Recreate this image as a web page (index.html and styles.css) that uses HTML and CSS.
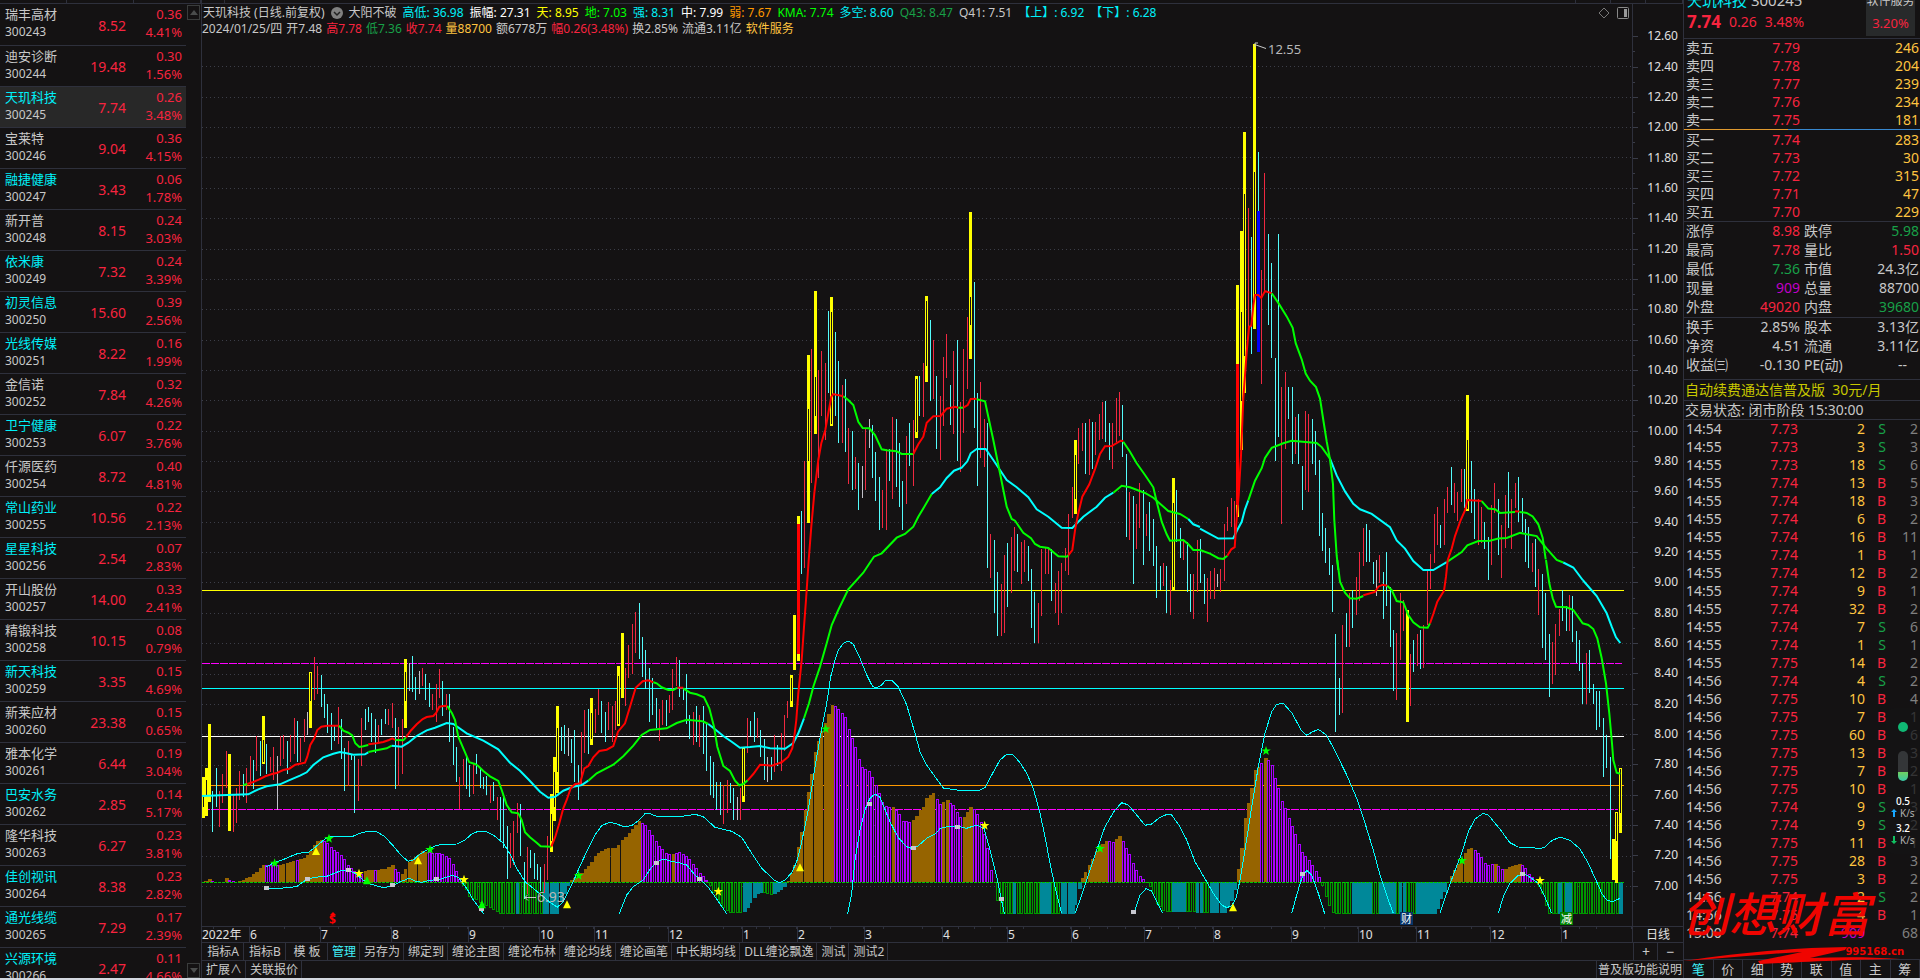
FILE: index.html
```html
<!DOCTYPE html>
<html lang="zh-CN">
<head>
    <meta charset="UTF-8">
    <meta name="viewport" content="width=device-width, initial-scale=1.0">
    <title>天玑科技 300245</title>
    <link rel="stylesheet" href="styles.css">
</head>
<body>
    <div class="app">
        <aside class="sidebar">
            <div class="strip strip-left"><i></i><i></i><i></i></div>
            <div class="sidebar-body">
                <table class="stocks">
                    <tbody id="stocks"></tbody>
                </table>
                <div class="scroll">
                    <button class="scroll-btn" aria-label="向上"><svg width="8" height="5" viewBox="0 0 8 5"><path d="M0 5L4 0L8 5Z" fill="#4a4c4c"/></svg></button>
                    <button class="scroll-btn" aria-label="向下"><svg width="8" height="5" viewBox="0 0 8 5"><path d="M0 0L4 5L8 0Z" fill="#4a4c4c"/></svg></button>
                </div>
            </div>
        </aside>

        <main class="main">
            <div class="strip strip-main"><i></i><i></i><i></i><i></i><i></i></div>
            <div class="chart">
                <div class="plot">
                    <header class="info">
                        <div class="info-row">
                            <span>天玑科技 (日线.前复权)</span>
                            <svg class="drop" width="12" height="12" viewBox="0 0 12 12"><circle cx="6" cy="6" r="6" fill="#808080"/><path d="M3 5L6 8L9 5" fill="none" stroke="#222" stroke-width="1.5"/></svg>
                            <span>大阳不破</span>
                            <span class="cyan">高低: 36.98</span>
                            <span class="white">振幅: 27.31</span>
                            <span class="yellow">天: 8.95</span>
                            <span class="lime">地: 7.03</span>
                            <span class="cyan">强: 8.31</span>
                            <span class="white">中: 7.99</span>
                            <span class="orange">弱: 7.67</span>
                            <span class="lime">KMA: 7.74</span>
                            <span class="cyan">多空: 8.60</span>
                            <span class="green">Q43: 8.47</span>
                            <span>Q41: 7.51</span>
                            <span class="cyan">【上】: 6.92</span>
                            <span class="cyan">【下】: 6.28</span>
                            <span class="tools">
                                <svg width="12" height="12" viewBox="0 0 12 12"><path d="M6 1L11 6L6 11L1 6Z" fill="none" stroke="#777"/></svg>
                                <svg width="12" height="12" viewBox="0 0 12 12"><rect x="0.5" y="0.5" width="11" height="11" rx="1" fill="none" stroke="#888"/><rect x="7" y="2" width="3" height="8" fill="#999"/></svg>
                            </span>
                        </div>
                        <div class="info-row tight">
                            <span>2024/01/25/四</span>
                            <span>开7.48</span>
                            <span class="red">高7.78</span>
                            <span class="green">低7.36</span>
                            <span class="red">收7.74</span>
                            <span class="gold">量88700</span>
                            <span>额6778万</span>
                            <span class="red">幅0.26(3.48%)</span>
                            <span>换2.85%</span>
                            <span>流通3.11亿</span>
                            <span class="gold">软件服务</span>
                        </div>
                    </header>
                    <svg class="canvas" id="canvas" viewBox="202 37 1430 889" preserveAspectRatio="none"></svg>
                </div>
                <div class="axis" id="axis"></div>
            </div>
            <div class="dates">
                <div class="months">
                    <span>2022年</span><span>6</span><span>7</span><span>8</span><span>9</span><span>10</span><span>11</span><span>12</span><span>1</span><span>2</span><span>3</span><span>4</span><span>5</span><span>6</span><span>7</span><span>8</span><span>9</span><span>10</span><span>11</span><span>12</span><span>1</span>
                </div>
                <button class="period">日线</button>
            </div>
            <nav class="tabs">
                <button class="short">指标A</button>
                <button class="short">指标B</button>
                <button class="short">模 板</button>
                <button class="active">管理</button>
                <button>另存为</button>
                <button>绑定到</button>
                <button>缠论主图</button>
                <button>缠论布林</button>
                <button>缠论均线</button>
                <button>缠论画笔</button>
                <button>中长期均线</button>
                <button>DLL缠论飘逸</button>
                <button>测试</button>
                <button>测试2</button>
                <button class="zoom first">+</button>
                <button class="zoom">−</button>
            </nav>
            <nav class="tabs">
                <button>扩展∧</button>
                <button>关联报价</button>
                <button class="first help">普及版功能说明</button>
            </nav>
        </main>

        <aside class="quote">
            <section class="head">
                <div class="head-left">
                    <div class="head-name"><b class="cyan">天玑科技</b> 300245</div>
                    <div class="head-price red"><strong>7.74</strong><span>0.26</span><span>3.48%</span></div>
                </div>
                <div class="sector"><span>软件服务</span><span class="red">3.20%</span></div>
            </section>
            <table class="book">
                <tbody>
                    <tr><th>卖五</th><td>7.79</td><td>246</td></tr>
                    <tr><th>卖四</th><td>7.78</td><td>204</td></tr>
                    <tr><th>卖三</th><td>7.77</td><td>239</td></tr>
                    <tr><th>卖二</th><td>7.76</td><td>234</td></tr>
                    <tr><th>卖一</th><td>7.75</td><td>181</td></tr>
                </tbody>
            </table>
            <div class="ratio"></div>
            <table class="book">
                <tbody>
                    <tr><th>买一</th><td>7.74</td><td>283</td></tr>
                    <tr><th>买二</th><td>7.73</td><td>30</td></tr>
                    <tr><th>买三</th><td>7.72</td><td>315</td></tr>
                    <tr><th>买四</th><td>7.71</td><td>47</td></tr>
                    <tr><th>买五</th><td>7.70</td><td>229</td></tr>
                </tbody>
            </table>
            <table class="stats">
                <tbody>
                    <tr><th>涨停</th><td class="red">8.98</td><th>跌停</th><td class="green">5.98</td></tr>
                    <tr><th>最高</th><td class="red">7.78</td><th>量比</th><td class="red">1.50</td></tr>
                    <tr><th>最低</th><td class="green">7.36</td><th>市值</th><td>24.3亿</td></tr>
                    <tr><th>现量</th><td class="purple">909</td><th>总量</th><td>88700</td></tr>
                    <tr><th>外盘</th><td class="red">49020</td><th>内盘</th><td class="green">39680</td></tr>
                </tbody>
            </table>
            <table class="stats more">
                <tbody>
                    <tr><th>换手</th><td>2.85%</td><th>股本</th><td>3.13亿</td></tr>
                    <tr><th>净资</th><td>4.51</td><th>流通</th><td>3.11亿</td></tr>
                    <tr><th>收益㈢</th><td>-0.130</td><th>PE(动)</th><td class="none">--</td></tr>
                </tbody>
            </table>
            <a class="promo" href="#">自动续费通达信普及版&nbsp; 30元/月</a>
            <div class="status">交易状态: 闭市阶段 15:30:00</div>
            <table class="ticks">
                <tbody id="ticks"></tbody>
            </table>
            <nav class="quote-tabs">
                <button class="active">笔</button><button>价</button><button>细</button><button>势</button><button>联</button><button>值</button><button>主</button><button>筹</button>
            </nav>
            <div class="brand">
                <div class="brand-name">创想财富</div>
                <svg class="brand-line" width="220" height="20" viewBox="0 0 220 20"><path d="M1 15C50 8 100 2 165 1L163 4L128 12C160 11 190 11 218 13C180 13 120 16 78 18L76 15L120 6C80 8 40 13 1 15Z" fill="#f00400"/></svg>
                <span class="brand-site">995168.cn</span>
            </div>
            <div class="speed">
                <i class="dot"></i>
                <i class="tube"></i>
                <div class="rate"><b>0.5</b><span><svg width="6" height="8" viewBox="0 0 6 8"><path d="M3 0L6 3H4V8H2V3H0Z" fill="#18a8ff"/></svg> K/s</span></div>
                <div class="rate"><b>3.2</b><span><svg width="6" height="8" viewBox="0 0 6 8"><path d="M3 8L6 5H4V0H2V5H0Z" fill="#10c060"/></svg> K/s</span></div>
            </div>
        </aside>
    </div>
    <script src="chart.js"></script>
</body>
</html>
```

FILE: styles.css
```css
* {
    box-sizing: border-box;
}
body {
    margin: 0;
    background: #141213;
    color: #c8c8c8;
    font: 12px/16px "Noto Sans", "Noto Sans CJK SC", sans-serif;
}
button {
    margin: 0;
    padding: 0;
    border: 0;
    background: none;
    color: inherit;
    font: inherit;
    cursor: pointer;
}
table {
    width: 100%;
    border-collapse: collapse;
    table-layout: fixed;
}
th, td {
    padding: 0;
    font-weight: normal;
    white-space: nowrap;
}
th {
    text-align: left;
}
td {
    text-align: right;
}
.red { color: #f7243f; }
.green { color: #18a048; }
.lime { color: #00ff00; }
.cyan { color: #00f0f8; }
.white { color: #ffffff; }
.yellow { color: #ffff00; }
.orange { color: #ff9900; }
.gold { color: #ffc440; }
.purple { color: #c000c8; }

.app {
    display: grid;
    grid-template-columns: 202px minmax(0, 1fr) 237px;
    height: 100vh;
    overflow: hidden;
    border-bottom: 2px solid #d4d8e0;
}
.strip {
    display: grid;
    flex: none;
    height: 4px;
    border-bottom: 1px solid #2e303c;
}
.strip i {
    border-right: 1px solid #2e303c;
}
.strip-left {
    grid-template-columns: repeat(3, 1fr);
}
.strip-main {
    grid-template-columns: 23px 1fr 35px 35px 37px;
}

/* stock list */
.sidebar {
    display: flex;
    flex-direction: column;
    min-height: 0;
    overflow: hidden;
    border-right: 1px solid #2e303c;
}
.sidebar-body {
    display: flex;
    flex: 1;
    min-height: 0;
    overflow: hidden;
}
.stocks {
    flex: 1;
    align-self: flex-start;
}
.stocks tr {
    height: 41px;
    border-bottom: 1px solid #2e303c;
}
.stocks .selected {
    background: #282828;
}
.stocks th {
    width: 70px;
    padding: 0 0 2px 5px;
    font-size: 13px;
    line-height: 18px;
}
.stocks th small {
    display: block;
    color: #c8c8c8;
    font-size: 12px;
}
.stocks td {
    padding: 3px 2px 0 0;
    color: #f7243f;
    font-size: 14px;
}
.stocks .change {
    padding: 0 4px 2px 0;
    font-size: 13px;
    line-height: 18px;
}
.scroll {
    display: flex;
    flex-direction: column;
    justify-content: space-between;
    width: 15px;
    padding: 1px 1px 0;
}
.scroll-btn {
    display: flex;
    align-items: center;
    justify-content: center;
    height: 15px;
    border: 1px solid #3a3c3c;
}

/* chart */
.main {
    display: flex;
    flex-direction: column;
    min-width: 0;
    min-height: 0;
}
.chart {
    display: flex;
    flex: 1;
    min-height: 0;
}
.plot {
    display: flex;
    flex: 1;
    flex-direction: column;
    min-width: 0;
}
.info {
    flex: none;
    height: 33px;
    padding-top: 1px;
    white-space: nowrap;
    overflow: hidden;
}
.info-row {
    display: flex;
    align-items: center;
    gap: 6px;
    height: 16px;
    padding-left: 1px;
}
.info-row.tight {
    gap: 4px;
    padding-left: 0;
}
.tools {
    display: flex;
    gap: 7px;
    margin-left: auto;
    padding-right: 3px;
}
.canvas {
    display: block;
    flex: 1;
    width: 100%;
    min-height: 0;
}
.axis {
    display: flex;
    flex: none;
    flex-direction: column;
    width: 51px;
    padding: 17px 0 25px;
    border-left: 1px solid #2e303c;
}
.axis span {
    display: flex;
    position: relative;
    flex: 1;
    align-items: center;
    justify-content: flex-end;
    padding-right: 5px;
    color: #e0e0e0;
}
.axis span::before,
.axis span::after {
    content: "";
    position: absolute;
    left: 0;
    top: 50%;
    width: 5px;
    height: 1px;
    background: #3a3c48;
}
.axis span::after {
    top: 100%;
    width: 2px;
}
.dates {
    display: flex;
    flex: none;
    height: 16px;
    border-top: 1px solid #2e303c;
    color: #e0e0e0;
    line-height: 15px;
}
.months {
    display: grid;
    flex: 1;
    grid-template-columns: 47fr 71fr 71fr 77fr 71fr 55fr 74fr 74fr 55fr 67fr 78fr 65fr 64fr 73fr 69fr 78fr 67fr 58fr 74fr 71fr 71fr;
}
.months span {
    min-width: 0;
    border-left: 1px solid #2e303c;
    background: repeating-linear-gradient(90deg, transparent 0 24%, #2e303c 24% 25%) 0 0 / 100% 2px no-repeat;
    white-space: nowrap;
}
.months span:first-child {
    border-left: 0;
}
.period {
    width: 51px;
    border-left: 1px solid #2e303c;
    line-height: 15px;
}
.tabs {
    display: flex;
    flex: none;
    height: 18px;
    border-top: 1px solid #2e303c;
}
.tabs button {
    padding: 0 3px 0 4px;
    border-right: 1px solid #2e303c;
    line-height: 16px;
    white-space: nowrap;
}
.tabs .short {
    min-width: 42px;
}
.tabs .active,
.quote-tabs .active {
    color: #40f0f8;
}
.tabs .first {
    margin-left: auto;
    border-left: 1px solid #2e303c;
}
.tabs .zoom {
    width: 25px;
    font-size: 14px;
}
.tabs .help,
.tabs .zoom:last-child {
    padding: 0 1px;
    border-right: 0;
}

/* quote panel */
.quote {
    position: relative;
    display: flex;
    flex-direction: column;
    min-height: 0;
    border-left: 1px solid #2e303c;
    font-size: 14px;
}
.head {
    display: flex;
    flex: none;
    justify-content: space-between;
    height: 39px;
    padding: 0 5px 0 3px;
    overflow: hidden;
    border-bottom: 1px solid #2e303c;
}
.head-left {
    display: flex;
    flex-direction: column;
    justify-content: flex-end;
    padding-bottom: 6px;
}
.head-name {
    line-height: 24px;
    font-size: 15px;
}
.head-name b {
    font-weight: normal;
}
.head-price {
    display: flex;
    gap: 8px;
    line-height: 20px;
}
.head-price strong {
    font-size: 17px;
}
.sector {
    display: flex;
    flex-direction: column;
    justify-content: flex-end;
    align-items: center;
    width: 49px;
    height: 36px;
    background: #282a2b;
    font-size: 12px;
    line-height: 20px;
}
.sector .red {
    font-size: 13px;
    line-height: 25px;
}
.book, .stats, .ticks {
    flex: none;
}
.book tr {
    height: 18px;
}
.book th, .stats th, .ticks th {
    padding-left: 2px;
}
.book th {
    width: 70px;
}
.book td:nth-child(2) {
    width: 46px;
    color: #f7243f;
}
.book td:nth-child(3) {
    padding-right: 1px;
    color: #ffc440;
}
.ratio {
    flex: none;
    height: 1px;
    margin-bottom: 1px;
    background: linear-gradient(90deg, #e09a30 44%, #3888d0 44%);
}
.stats {
    border-top: 1px solid #2e303c;
}
.stats tr {
    height: 19px;
}
.stats th {
    width: 48px;
}
.stats th:nth-child(3) {
    padding-left: 4px;
}
.stats td:nth-child(2) {
    width: 68px;
}
.stats td:nth-child(4) {
    padding-right: 1px;
}
.stats td.none:nth-child(4) {
    padding-right: 13px;
}
.promo {
    flex: none;
    height: 21px;
    margin-top: 5px;
    padding-left: 1px;
    border-top: 1px solid #2e303c;
    color: #c8c800;
    line-height: 20px;
    text-decoration: none;
}
.status {
    flex: none;
    height: 20px;
    padding-left: 1px;
    border-top: 1px solid #2e303c;
    border-bottom: 1px solid #2e303c;
    line-height: 17px;
}
.ticks tr {
    height: 18px;
}
.ticks th {
    width: 48px;
}
.ticks td:nth-child(2) {
    width: 66px;
}
.ticks td:nth-child(3) {
    width: 67px;
}
.ticks td:nth-child(4) {
    width: 21px;
}
.ticks td:nth-child(5) {
    padding-right: 2px;
    color: #808080;
}
.quote-tabs {
    display: grid;
    flex: none;
    grid-template-columns: repeat(8, 1fr);
    height: 19px;
    margin-top: auto;
    border-top: 1px solid #2e303c;
    font-size: 13px;
}
.quote-tabs button {
    border-right: 1px solid #2e303c;
    line-height: 17px;
}

/* overlays */
.brand {
    position: absolute;
    right: 16px;
    bottom: 12px;
    width: 222px;
    color: #f00400;
    pointer-events: none;
}
.brand-name {
    margin-bottom: 8px;
    font: italic 500 47px/52px "Noto Sans CJK SC", sans-serif;
    white-space: nowrap;
}
.brand-line {
    display: block;
}
.brand-site {
    position: absolute;
    right: 0;
    bottom: 8px;
    font: bold 10px/12px "DejaVu Sans", sans-serif;
}
.speed {
    position: absolute;
    right: 0;
    bottom: 124px;
    display: flex;
    flex-direction: column;
    align-items: center;
    width: 34px;
    height: 146px;
    padding-top: 14px;
    border-radius: 8px 0 0 8px;
    background: rgba(20, 20, 22, 0.7);
    color: #fff;
    font-size: 10px;
    line-height: 12px;
}
.dot {
    flex: none;
    width: 10px;
    height: 10px;
    margin-bottom: 19px;
    border-radius: 50%;
    background: #10b874;
}
.tube {
    flex: none;
    width: 10px;
    height: 30px;
    margin-bottom: 14px;
    border-radius: 5px;
    background: linear-gradient(#343638 70%, #70d060 70%, #38c8a8);
}
.rate {
    margin-bottom: 3px;
    text-align: center;
    white-space: nowrap;
}
.rate b {
    display: block;
    font-weight: 500;
}
.rate span {
    color: #b0b0b0;
}
```

FILE: chart.js
```js
const stocks = [
    ['瑞丰高材', '8.52', '0.36', '4.41'], ['迪安诊断', '19.48', '0.30', '1.56'],
    ['天玑科技', '7.74', '0.26', '3.48', 1], ['宝莱特', '9.04', '0.36', '4.15'],
    ['融捷健康', '3.43', '0.06', '1.78', 1], ['新开普', '8.15', '0.24', '3.03'],
    ['依米康', '7.32', '0.24', '3.39', 1], ['初灵信息', '15.60', '0.39', '2.56', 1],
    ['光线传媒', '8.22', '0.16', '1.99', 1], ['金信诺', '7.84', '0.32', '4.26'],
    ['卫宁健康', '6.07', '0.22', '3.76', 1], ['仟源医药', '8.72', '0.40', '4.81'],
    ['常山药业', '10.56', '0.22', '2.13', 1], ['星星科技', '2.54', '0.07', '2.83', 1],
    ['开山股份', '14.00', '0.33', '2.41'], ['精锻科技', '10.15', '0.08', '0.79'],
    ['新天科技', '3.35', '0.15', '4.69', 1], ['新莱应材', '23.38', '0.15', '0.65'],
    ['雅本化学', '6.44', '0.19', '3.04'], ['巴安水务', '2.85', '0.14', '5.17', 1],
    ['隆华科技', '6.27', '0.23', '3.81'], ['佳创视讯', '8.38', '0.23', '2.82', 1],
    ['通光线缆', '7.29', '0.17', '2.39', 1], ['兴源环境', '2.47', '0.11', '4.66', 1]
];
document.getElementById('stocks').innerHTML = stocks.map(([name, price, diff, pct, hot], i) =>
    `<tr class="${i === 2 ? 'selected' : ''}"><th class="${hot ? 'cyan' : ''}">${name}<small>${300243 + i}</small></th>` +
    `<td>${price}</td><td class="change">${diff}<br>${pct}%</td></tr>`).join('');

const ticks = `14:54 7.73 2 S 2|14:55 7.73 3 S 3|14:55 7.73 18 S 6|14:55 7.74 13 B 5|14:55 7.74 18 B 3|14:55 7.74 6 B 2
14:55 7.74 16 B 11|14:55 7.74 1 B 1|14:55 7.74 12 B 2|14:55 7.74 9 B 1|14:55 7.74 32 B 2|14:55 7.74 7 S 6
14:55 7.74 1 S 1|14:55 7.75 14 B 2|14:56 7.74 4 S 2|14:56 7.75 10 B 4|14:56 7.75 7 B 1|14:56 7.75 60 B 6
14:56 7.75 13 B 3|14:56 7.75 7 B 2|14:56 7.75 10 B 1|14:56 7.74 9 S 3|14:56 7.74 9 S 2|14:56 7.75 11 B 1
14:56 7.75 28 B 3|14:56 7.75 3 B 2|14:56 7.74 2 S 2|14:56 7.75 4 B 1|15:00 7.74 909 - 68`;
document.getElementById('ticks').innerHTML = ticks.split(/[|\n]/).map(row => {
    const [time, price, vol, side, count] = row.split(' ');
    return `<tr><th>${time}</th><td class="red">${price}</td><td class="${side === '-' ? 'purple' : 'gold'}">${vol}</td>` +
        `<td class="${side === 'S' ? 'green' : 'red'}">${side === '-' ? '' : side}</td><td>${count}</td></tr>`;
}).join('');

let labels = '';
for (let i = 0; i <= 28; i++) {
    labels += `<span>${(12.6 - i * 0.2).toFixed(2)}</span>`;
}
document.getElementById('axis').innerHTML = labels;

// Chart sections: origin on the canvas and units per pixel on each axis
const sections = {
    A: [200, 540, 3, 3],
    B: [680, 560, 3, 3],
    C: [700, 200, 3, 3],
    D: [1150, 20, 3, 2.8],
    E: [1160, 560, 3, 3]
};
const px = (s, x) => sections[s][0] + x / sections[s][2];
const py = (s, y) => sections[s][1] + y / sections[s][3];

// r rising, c falling, w flat, y signal (solid), b marked; extra pair = hollow body
const bars = {
    A: `y9 711 833 768 800,y19 684 828 720 765,y28 552 785,c38 753 876,c49 684 801,r58 753 861,r67 702 789,r79 633 744,y88 642 873,r100 765 876,r109 744 849,r118 693 780,c130 702 771,r139 684 789,r151 648 738,c160 660 747,r169 588 693,c181 603 708,y190 528 671 600 667,c199 612 702,r211 651 696,r220 621 720,w232 648 810,r241 588 678,r250 585 657,c262 603 702,r271 585 666,r283 534 642,c292 543 666,r301 594 666,r313 537 606,w322 516 585,y331 396 564 400 484,r343 351 480,r352 378 462,c364 405 501,c373 462 534,c382 492 579,c394 519 630,c403 558 603,r415 501 612,c424 537 657,c433 624 753,r445 603 738,c454 642 660,c463 648 819,r475 657 783,r484 534 678,c496 507 570,c505 501 546,c514 519 606,c526 537 639,r535 555 612,c544 537 585,c556 507 552,r565 507 555,r577 489 564,c586 534 747,r595 561 738,r607 537 702,y616 357 564 396 484,w628 369 453,c637 348 456,c646 411 480,w658 393 462,r667 384 438,c676 402 480,c688 429 501,r697 462 510,r709 432 546,r718 387 474,c727 423 528,r739 462 510,c748 462 606,c760 561 675,c769 621 726,r778 711 807,r790 657 738,c799 648 747,c808 675 771,r820 669 762,c829 642 702,c841 684 744,c850 711 747,c859 708 765,r871 738 789,c880 726 783,r892 771 840,c901 771 906,c910 765 924,c922 858 1017,r931 879 984,r940 843 975,r952 789 879,c961 792 948,c973 966 1077,r982 921 1062,c991 930 984,c1003 939 1017,c1012 972 1020,c1021 981 1053,r1033 972 1059,r1042 888 1020,y1054 762 936 822 904,y1063 651 843 696 800,y1072 498 760 564 696,c1084 561 633,c1093 555 642,w1105 564 648,c1114 597 669,c1123 570 726,c1135 675 780,r1144 576 738,r1153 510 639,c1165 507 642,y1174 474 615 520 598,r1186 507 579,r1195 447 525,c1204 483 579,c1216 516 606,r1225 486 570,r1237 498 606,r1246 483 570,y1255 378 558 408 552,y1267 279 474,r1276 384 498,r1285 315 414,r1297 252 402,r1306 216 339,c1318 189 357,c1327 291 411,c1336 330 447,c1348 384 546,c1357 414 525,c1369 474 564,r1378 507 603,r1387 480 555,c1399 480 558,r1408 465 519,r1417 387 510,r1429 351 438,c1438 360 471,c1450 447 480,c1459 402 552,c1468 525 597,r1480 516 615,c1489 498 606`,
    B: `r58 465 561,c70 438 582,c79 492 633,c91 588 705,c100 606 714,c109 666 750,c121 666 765,r130 675 792,r142 660 759,c151 669 729,c160 684 780,w172 711 780,r181 684 780,y190 561 726 568 708,r202 474 579,c211 483 528,c223 456 546,r232 474 534,c241 510 591,c253 537 660,w262 591 666,c274 591 660,r283 525 636,c292 555 618,r304 519 633,r313 465 573,r322 423 474,y334 345 441 354 422,y343 165 330`,
    C: `y295 948 1383,R295 972 1362,c304 933 1122,r313 783 1104,y325 465 969 627 783,r334 447 849,y346 273 702 531 648,r355 510 834,r364 453 648,r376 489 720,c385 333 579,y394 291 678 336 672,c406 396 648,c415 483 729,r427 555 729,c436 537 756,r445 684 852,c457 693 870,r466 771 867,c475 789 930,w487 798 894,r496 684 870,w508 657 744,c517 675 834,c526 756 903,c538 831 990,r547 870 984,r559 747 990,c568 747 843,r577 651 897,c589 657 861,c598 729 921,c607 843 990,r619 708 912,c628 669 798,r640 660 858,y649 528 714 537 696,c658 528 648,r670 489 651,y679 288 546 303 498,c691 360 603,r700 420 597,c709 528 747,r721 588 780,r730 471 678,r739 402 534,c751 555 675,r760 453 702,c772 420 783,r781 606 816,r790 447 699,r802 351 567,y811 36 477 291 375,c823 246 684,c832 579 858,r841 546 774,r853 657 801,c862 669 1104,r871 1002 1134,c883 1020 1239,c892 1116 1308,r904 1152 1308,r913 1065 1299,c922 1029 1221,r934 1011 1179,r943 981 1113,c952 1002 1116,r964 1026 1152,r973 1020 1116,c985 1038 1143,c994 1107 1284,c1003 1176 1329,r1015 1209 1329,r1024 1047 1248,r1036 1044 1122,r1045 1044 1122,c1054 1047 1203,r1066 1149 1239,r1075 1113 1275,r1084 1089 1239,r1096 1044 1113,r1105 942 1125,r1117 861 954,y1126 720 942 765 897,r1135 684 792,r1147 669 753,c1156 669 822,r1168 657 825,c1177 666 807,r1186 666 765,r1198 642 720,r1207 606 717,c1216 603 726,c1228 669 780,r1237 669 807,r1249 594 726,r1258 576 708,c1267 615 771,c1279 762 1011,r1288 876 1020,c1300 888 1152,r1309 912 1047,r1318 849 984,c1330 870 1095,r1339 942 1008,c1348 906 1053,c1360 957 1098,c1369 1038 1194,c1381 1098 1170,r1390 1089 1158,c1399 1098 1239,r1411 1140 1245,y1420 834 1170 909 1160,c1429 870 1026,c1441 984 1074,r1450 1020 1080,c1462 1026 1176,c1471 1122 1236,r1480 1122 1257,r1492 1020 1176`,
    D: `c151 1453 1576,c163 1551 1635,r172 1562 1685,r181 1543 1621,r193 1534 1621,w202 1551 1587,r211 1537 1601,r223 1411 1571,r232 1364 1431,r244 1338 1420,r253 1347 1450,y262 742 1392,R262 963 1358,y274 591 1204 818 1067,y283 314 1044 487 940,r295 526 880,c304 608 936,y313 68 865 426 780,c325 370 540,b325 535 930,r334 700 1019,r343 428 762,c355 599 854,c364 680 946,c376 946 1235,c385 599 1168,r394 1028 1411,r406 986 1201,c415 1028 1117,c427 1028 1243,r436 1112 1215,c445 1103 1243,c457 1249 1372,r466 1095 1316,r475 1103 1322,c487 1117 1243,c496 1151 1274,c508 1232 1445,c517 1380 1487,c526 1422 1520,c538 1478 1554,c547 1526 1657,r862 1364 1470,c871 1414 1478,r883 1341 1470,r892 1308 1380,c904 1252 1358,r913 1296 1380,r922 1322 1403,r934 1257 1350,c943 1257 1366,y952 1050 1375 1176 1370,c964 1235 1380,c973 1313 1453,r985 1341 1470,r994 1364 1464,c1003 1406 1481,c1015 1448 1568,r1024 1358 1526,r1033 1296 1380,c1045 1341 1498,r1054 1414 1562,r1066 1330 1478,c1075 1266 1422,r1084 1341 1481,r1096 1296 1366,c1105 1280 1406,c1117 1338 1434,c1126 1397 1518,c1135 1420 1534,r1147 1464 1546,c1156 1453 1588,r1165 1537 1665,c1177 1551 1758`,
    E: `c526 222 516,c538 354 465,r547 195 459,c559 159 261,r568 99 261,c577 90 204,r589 51 165,r598 -24 123,r610 -96 18,c619 -108 6,c628 -90 6,c640 6 72,w649 0 108,r658 -15 69,c670 36 177,c679 -24 138,c691 81 261,c700 210 393,r709 219 420,r721 99 300,r730 120 213,y742 150 486,r751 282 438,c760 240 336,r772 222 318,c781 210 327,r790 195 324,r802 27 195,r811 -18 87,r823 -138 9,c1156 99 300,c1168 222 411,r1177 246 372,r1186 192 345,r1198 147 228,c1207 90 183,c1219 138 213,r1228 105 213,c1237 108 246,c1249 213 309,c1258 240 333,c1267 309 432,r1279 279 432,c1288 270 399,c1300 372 432,c1309 393 510,c1318 393 501,c1330 474 651,c1339 525 624,c1351 591 897,y1360 837 960,y1369 756 969 760 843,y1381 624 819 628 760`
};

// Trend lines: section, colour, points
const trends = `
A c 6,768 60,766 145,763 175,748 200,739 240,733 265,722 300,707 320,697 340,675 370,652 400,641 420,636 440,640 460,644 495,643 505,637
A g 505,636 530,631 560,625 575,617
A c 575,617 605,620 625,608 650,588 680,571 705,563 740,549 760,552 800,580 850,602 895,628 930,668 960,692 985,718 1020,755 1045,773 1065,770 1090,752 1120,740 1145,735 1165,722
A g 1165,722 1190,700 1240,674 1270,649 1300,617 1325,585 1350,570 1400,565 1430,549 1460,539 1500,543
B g 60,483 68,484 85,492
B c 85,492 105,508 130,528 155,545 180,563 210,561 240,558 270,565 315,566 340,549 355,520 372,475
B g 372,475 387,430 400,380 420,320 440,250 455,195 475,150 505,88 550,38 575,0
C g 515,1080 522,1070 545,1060 590,1013 615,1002 640,980 655,950 672,922 695,882
C c 695,882 720,862 740,834 762,812 785,803 802,784 812,760 830,747 857,747 880,780 920,840 950,862 985,892 1010,928 1045,950 1085,983 1117,984 1150,950 1190,920 1215,893 1240,878
C g 1240,878 1265,857 1290,862 1335,879 1360,893 1405,933 1440,942 1465,957
C c 1465,957 1480,973 1500,981
D c 150,1424 165,1432 205,1452 250,1451 262,1428 275,1405 285,1370 295,1345
D g 295,1345 315,1290 335,1255 345,1226 365,1198 400,1185 425,1178 500,1184 515,1196 540,1228
D c 540,1228 560,1275 585,1320 610,1355 630,1370 665,1383 720,1420 740,1457 765,1480 790,1515 820,1540 850,1540 890,1518
D g 890,1518 935,1490 952,1471 985,1459 1020,1458 1045,1452 1070,1450 1110,1436 1160,1445 1190,1480 1220,1512 1240,1519
D c 1240,1519 1270,1533 1298,1568
E c 1268,60 1310,108 1340,160 1355,200 1368,232 1381,249
A g 130,735 142,732
A r 142,732 160,726 178,718 196,709 214,703 232,698 250,690 268,686 286,674 300,671 315,668 322,650 331,615 343,595 352,570 364,560 382,557 417,557
A g 417,557 430,572 445,578 457,586 466,610 478,621 490,619 505,615
A r 505,613 530,610 550,606 565,601 577,595 586,600
A g 586,600 610,601 618,592
A r 618,592 632,572 650,553 668,537 680,531 700,528 709,518 718,500 735,497 742,498
A g 742,498 756,520 765,540 775,590 790,625 808,667 825,672 835,678 850,693 870,709 895,723 905,750 920,795 935,817 955,820 965,840 975,877 990,892 1010,908 1022,919 1054,920
A r 1054,920 1066,890 1078,850 1090,805 1100,780 1112,745 1125,733 1140,730 1153,685 1165,678 1180,652 1198,633 1220,629 1240,618 1254,575 1275,550 1290,500 1307,443 1328,424 1345,421 1360,427
A g 1360,427 1370,430 1385,442 1405,450 1420,450 1432,443
A r 1432,443 1450,443
B g 10,385 30,398 50,403 72,412 88,445 102,500 112,560 130,618 150,633 165,662 178,676 190,672 203,661
B r 203,661 220,642 240,614 275,617 305,607 325,590 337,565 343,530 349,480 355,400 365,300 372,200 378,120
C r 318,1200 326,1080 334,980 343,880 355,780 364,730 376,690 385,640 394,590 400,582 430,589
C g 430,589 445,600 460,615 475,665 488,684 508,685 525,705 545,748 560,751 590,754 605,762 640,762
C r 640,762 655,733 670,710 680,668 700,649 722,648 740,626 765,620 775,623
C g 775,623 790,623
C r 790,623 803,615 812,597 830,596
C g 830,598 855,604 865,650 880,720 900,820 920,920 935,957 945,962 970,998 993,1015 1005,1032 1020,1040 1045,1044 1075,1069 1100,1070 1105,1066
C r 1105,1066 1117,1050 1126,985 1135,940 1147,890 1168,853 1186,805 1200,762 1215,739 1235,738 1262,722 1270,723
C g 1270,725 1290,755 1310,790 1335,825 1360,862 1370,905 1385,965 1400,1003 1410,1022 1450,1020 1465,1033 1480,1050 1500,1050
D g 150,1484 180,1494 205,1507 220,1509 232,1500
D r 232,1500 244,1482 254,1476 259,1410 266,1330 273,1220 280,1060 290,930 297,860 304,856 310,800 315,770 325,770 334,778 345,759 365,765
D g 365,765 385,792 410,830 428,862 437,905 455,950 467,990 480,1010 498,1028 510,1060 520,1120 530,1180 540,1230 549,1300 553,1400 560,1500 565,1540
E g 532,0 540,65 555,98 570,115 590,116 610,108
E r 610,106 645,96 655,80 668,74 682,77
E g 682,77 695,90 710,123 730,127 745,165 760,187 780,202 803,203 810,190
E r 810,190 820,162 832,125 852,92 858,50 863,0
D r 893,1512 905,1480 915,1445 932,1400 945,1373 952,1344 995,1347
D g 995,1347 1015,1368 1035,1370 1050,1380 1095,1378
D r 1095,1376 1108,1376
D g 1108,1378 1130,1380 1148,1390 1165,1412 1178,1450 1187,1510
E g 1158,0 1168,70 1178,115 1188,140 1220,142 1240,150 1268,190 1285,195 1300,207 1312,235 1325,295 1338,370 1348,460 1356,550 1360,600 1370,638 1381,641`;

const waves = `
A t 199,980 225,967 245,961 265,952 295,940 325,937 345,922 375,897 388,889 458,889 480,880 500,875 530,875 555,890 580,918 605,948 625,964 640,960 655,946 680,930 710,916 730,913 770,912 795,900 815,882 835,874 860,875 885,889 910,910 930,942 950,985 975,1025 1000,1045 1020,1062 1050,1087 1072,1102 1090,1085 1115,1035 1140,978 1165,925 1185,885 1205,857 1230,846 1250,852 1272,860 1295,857 1315,842 1335,821 1352,822 1375,831 1440,830
B t 0,770 45,763 70,770 105,802 155,814 185,832 215,880 245,925 285,962 300,968 315,960 335,938 350,905 362,860 385,750 405,620 428,490 440,430 452,350 465,300 475,270 490,250 505,243 520,252 540,295 560,345 578,380 590,384 605,375 615,363 635,361 655,380 680,435 705,520 720,575 740,615 765,650 790,684 830,690 893,693 915,683 935,645 960,600 980,583 1000,585 1020,608 1040,640 1060,685 1080,760 1095,830 1110,910 1125,980 1145,1060
B t 1185,1060 1200,1020 1220,960 1245,885 1275,800 1305,750 1325,728 1345,735 1370,765 1395,796 1415,792 1440,772
E t 0,772 22,763 35,765 60,800 80,840 105,905 140,965 160,1000 185,1035 200,1043 215,1037 228,1015 240,960 255,870 275,740 295,620 315,520 335,455 350,433 370,430 395,458 425,513 440,526 455,517 475,508 500,526 525,573 560,645 590,715 615,790 640,870 660,945 685,1020 700,1060
E t 840,1060 860,1000 880,945 905,880 925,815 945,777 970,760 985,765 1020,808 1050,848 1075,861 1115,862 1137,867 1155,861 1175,842 1200,831 1230,841 1260,867 1285,910 1310,965 1325,1000 1340,1020 1358,1025 1380,1015
A t 200,1045 240,1045 290,1040 320,1018 345,1012 380,1009 420,993 445,990 465,1000 490,1020 510,1032 550,1043 578,1038 600,1025 628,1015 645,1023 665,1027 690,1021 720,1018 755,1006 775,1012 800,1045 820,1080 840,1106 851,1121
A t 1258,1121 1280,1065 1300,1040 1330,1020 1352,985 1372,965 1390,957 1410,963 1440,969
B t 0,909 20,915 45,945 65,962 85,982 105,1010 140,1061
B t 503,1061 515,1000 525,900 540,810 555,750 570,715 585,702 600,712 630,785 655,833 680,860 700,867 715,857 740,835 765,822 780,806 800,800 830,798 860,805 890,795 912,805 930,870 950,950 973,1061
B t 1363,1058 1380,1005 1398,986 1415,993 1435,1035 1448,1060
E t 395,1060 410,1005 425,955 440,931 455,945 475,1000 494,1061
E t 1015,1060 1030,1010 1050,970 1075,946 1095,943 1115,955 1135,970 1150,1000 1175,1060`;

// Histogram outline and the x where each bar style starts
const outline = {
    A: '6,1027 28,1018 40,1025 70,1025 79,1011 88,1020 110,1025 130,1020 160,1002 190,975 235,975 262,968 285,960 310,957 322,945 343,915 352,903 370,900 382,909 403,930 424,945 445,975 465,995 478,1005 496,993 508,990 530,990 555,986 577,975 586,990 605,1003 616,985 628,963 645,950 667,933 690,938 720,940 745,950 760,975 772,1003 780,1027 795,1045 808,1072 830,1080 850,1095 870,1105 892,1118 900,1121 1075,1121 1085,1078 1095,1053 1105,1035 1112,1022 1135,1005 1165,978 1186,946 1204,932 1225,925 1246,923 1267,900 1285,882 1306,853 1318,843 1336,856 1357,885 1378,920 1400,940 1417,943 1435,936',
    B: '0,877 20,888 58,936 79,960 86,967 95,990 110,1020 125,1040 150,1060 190,1060 200,1045 215,1022 235,998 250,998 275,1004 290,998 305,990 318,972 325,963 334,935 343,912 355,857 364,812 373,762 385,690 394,635 405,576 415,540 425,507 436,486 445,460 455,435 466,438 478,450 496,473 515,530 535,592 547,622 568,633 590,680 607,728 625,742 638,741 655,755 665,783 693,785 705,773 718,752 730,740 740,708 762,699 780,732 800,720 820,737 838,770 850,774 872,738 885,750 905,790 920,860 935,940 942,967 950,1020 962,1061 1178,1061 1188,1025 1197,988 1205,955 1230,910 1255,860 1275,843 1300,846 1318,828 1330,845 1350,890 1370,935 1393,962 1400,970 1412,985 1430,1030',
    E: '0,1040 10,1055 195,1060 215,1020 222,990 230,950 240,890 252,790 265,725 284,630 296,618 313,594 325,600 335,612 346,657 365,720 385,768 405,822 427,878 450,905 470,935 482,965 490,990 510,1045 520,1061 825,1061 838,1030 850,1000 862,970 875,945 890,915 905,900 920,868 937,862 955,880 980,915 1003,910 1025,928 1045,923 1075,910 1090,918 1110,945 1128,965 1140,985 1155,1030 1165,1061 1390,1061'
};
const styles = {
    A: 'o0 p30 o75 p85 o110 p196 o238 p288 o297 p370 o490 p522 o532 p583 o600 p682 g783 t948 g959 t1028 o1110 p1325 o1413 p1424',
    B: 'p0 g84 t186 g248 t280 o321 p461 o634 p645 o696 p766 o786 p806 o846 p877 g940 t1000 g1010 t1080 g1111 t1143 o1203 p1282 o1304 p1325 g1397',
    E: 'g0 t36 g77 t107 g127 t145 o229 p300 o309 p321 g486 t573 g634 t661 g706 t716 g737 t767 o869 p940 o999 p1009 o1031 p1081 g1132 t1194 g1205 t1213 g1236 t1376'
};
const colors = { r: '#ff0000', g: '#00ff00', c: '#00ffff', t: '#00ffff' };
const barColors = { r: '#f02840', c: '#54fcfc', w: '#c0c0c8', y: '#ffff00', R: '#ff0000', b: '#0000ff' };
const base = 882;

const rect = (x, y, w, h, fill) => `<rect x="${x}" y="${y}" width="${w}" height="${h}" fill="${fill}"/>`;
const line = (x1, y1, x2, y2, stroke, more = '') => `<path d="M${x1} ${y1}L${x2} ${y2}" stroke="${stroke}" ${more}/>`;

function drawLines(text, width) {
    return text.trim().split('\n').map(row => {
        const [s, color, ...pts] = row.split(' ');
        const points = pts.map(p => {
            const [x, y] = p.split(',').map(Number);
            return px(s, x).toFixed(1) + ',' + py(s, y).toFixed(1);
        }).join(' ');
        return `<polyline points="${points}" fill="none" stroke="${colors[color]}" stroke-width="${width}"/>`;
    }).join('');
}

function drawHistogram() {
    const tops = [];
    const kinds = [];
    for (const s in outline) {
        outline[s].split(' ').forEach(p => {
            const [x, y] = p.split(',').map(Number);
            tops.push([px(s, x), py(s, y)]);
        });
        styles[s].split(' ').forEach(k => kinds.push([px(s, Number(k.slice(1))), k[0]]));
    }
    let out = '';
    for (let i = 0; i < 420; i++) {
        const x = Math.floor(202.6 + i * 3.3846);
        let j = 0;
        while (j < tops.length - 2 && tops[j + 1][0] < x) j++;
        const [x0, y0] = tops[j];
        const [x1, y1] = tops[j + 1];
        const y = Math.round(y0 + (y1 - y0) * Math.min(1, Math.max(0, (x - x0) / (x1 - x0))));
        let kind = 'o';
        kinds.forEach(k => { if (k[0] <= x + 0.5) kind = k[1]; });
        const top = Math.min(y, base);
        const h = Math.abs(y - base);
        if (!h) continue;
        if (kind === 'o') out += rect(x - 1, top, i % 3 ? 4 : 3, h, '#966400');
        if (kind === 't') out += rect(x - 1, top, i % 3 ? 4 : 3, h, '#008899');
        if (kind === 'p' || kind === 'g') {
            out += rect(x - 1, top, 3, h, kind === 'p' ? '#aa00ff' : '#009600');
            if (h > 2) out += rect(x, kind === 'p' ? top + 1 : top, 1, h - 1, '#141213');
        }
    }
    return out;
}

function drawBars() {
    let out = '';
    for (const s in bars) {
        bars[s].split(',').forEach(item => {
            const kind = item[0];
            const [x, y1, y2, h1, h2] = item.slice(1).split(' ').map(Number);
            const left = Math.floor(px(s, x));
            const top = Math.round(py(s, y1));
            const bottom = Math.round(py(s, y2));
            const wide = 'yRb'.includes(kind);
            out += rect(wide ? left - 1 : left, top, wide ? 3 : 1, bottom - top, barColors[kind]);
            if (h1) out += rect(left, Math.round(py(s, h1)), 1, Math.round((h2 - h1) / sections[s][3]), '#141213');
        });
    }
    return out;
}

function star(s, x, y, fill) {
    let d = '';
    for (let i = 0; i < 10; i++) {
        const r = i % 2 ? 2 : 5;
        const a = Math.PI * i / 5;
        d += `${(px(s, x) + r * Math.sin(a)).toFixed(1)},${(py(s, y) - r * Math.cos(a)).toFixed(1)} `;
    }
    return `<polygon points="${d}" fill="${fill}"/>`;
}

function triangle(s, x, y, fill) {
    const cx = px(s, x);
    const cy = py(s, y);
    return `<polygon points="${cx},${cy - 4} ${cx + 4},${cy + 4} ${cx - 4},${cy + 4}" fill="${fill}"/>`;
}

let svg = '<g shape-rendering="crispEdges">';
for (let i = 1; i <= 28; i++) {
    const y = Math.round(36 + i * 30.36) + 0.5;
    svg += line(202, y, 1632, y, '#3c3e48', 'stroke-dasharray="1 3"');
}
[[590, '#ffff00'], [688, '#00ffff'], [736, '#ffffff'], [785, '#ff9900']].forEach(([y, c]) => {
    svg += line(202, y + 0.5, 1624, y + 0.5, c);
});
svg += line(202, 663.5, 1622, 663.5, '#ff00ff', 'stroke-dasharray="8 1"');
svg += line(202, 809.5, 1618, 809.5, '#ff00ff', 'stroke-dasharray="8 1"');
svg += drawHistogram();
svg += line(202, 882.5, 1624, 882.5, '#00c800', 'stroke-dasharray="3 1"');
svg += drawBars() + '</g>' + drawLines(trends, 2) + '<g shape-rendering="crispEdges">' + drawLines(waves, 1) + '</g>';

[['A', 199, 1044], ['A', 322, 1018], ['A', 445, 990], ['A', 577, 1035], ['A', 709, 1017], ['A', 842, 1106], ['A', 1369, 969], ['A', 1497, 1017], ['B', 568, 732], ['B', 700, 864], ['B', 832, 801], ['B', 964, 1017], ['B', 1360, 1055], ['E', 427, 942], ['E', 1087, 942]].forEach(([s, x, y]) => {
    svg += rect(Math.round(px(s, x)) - 2, Math.round(py(s, y)) - 2, 5, 4, '#c8c8d0');
});
[['A', 224, 970], ['A', 387, 896], ['A', 690, 929], ['A', 1136, 1007], ['B', 437, 507], ['B', 1260, 866], ['E', 318, 573], ['E', 906, 902]].forEach(p => { svg += star(...p, '#00ff00'); });
[['A', 477, 1001], ['A', 792, 1019], ['B', 115, 995], ['B', 914, 797], ['E', 1140, 962]].forEach(p => { svg += star(...p, '#ffff00'); });
[['A', 348, 933], ['A', 654, 961], ['A', 1101, 1093], ['B', 360, 922], ['E', 219, 1042]].forEach(p => { svg += triangle(...p, '#ffff00'); });
[['A', 501, 1021], ['A', 846, 1093]].forEach(p => { svg += triangle(...p, '#00ff00'); });

svg += `<path d="M536 897.5H525M528 894.5L525 897.5L528 900.5M1266 48.5L1256 45M1258 43H1255V47" fill="none" stroke="#c8c8c8"/>
<g fill="#b8b8b8" font-size="14"><text x="537" y="902">6.93</text><text x="1268" y="54" font-size="13">12.55</text></g>
<text x="329" y="924" font-size="12" font-weight="bold" fill="#ff0000">$</text>
<path d="M333 912L336 915H330Z" fill="#ff0000"/>
<rect x="1400" y="912" width="13" height="13" fill="#083468"/><text x="1401" y="923" font-size="11" fill="#fff">财</text>
<rect x="1560" y="912" width="13" height="13" fill="#008000"/><text x="1561" y="923" font-size="11" fill="#fff">减</text>`;
document.getElementById('canvas').innerHTML = svg;
```
